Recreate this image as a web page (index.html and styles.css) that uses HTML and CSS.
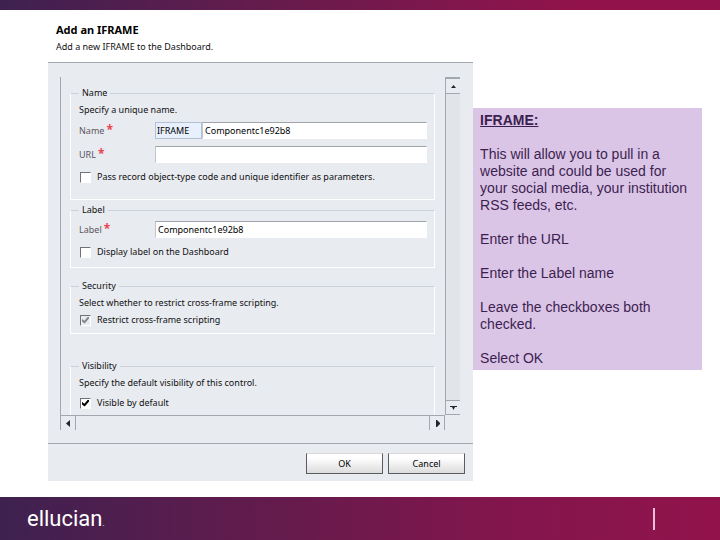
FILE: index.html
```html
<!DOCTYPE html>
<html lang="en">
<head>
    <meta charset="UTF-8">
    <title>Add an IFRAME</title>
    <link rel="stylesheet" href="styles.css">
</head>
<body>
<div class="top-bar"></div>

<main class="slide">
    <!-- Dialog -->
    <form class="dialog">
        <header class="dialog-header">
            <h1>Add an IFRAME</h1>
            <p>Add a new IFRAME to the Dashboard.</p>
        </header>

        <div class="dialog-body">
            <div class="scroll-area">
                <div class="pane">
                    <fieldset class="group group-name">
                        <legend>Name</legend>
                        <p>Specify a unique name.</p>
                        <div class="field">
                            <label for="name">Name<span class="required">*</span></label>
                            <input class="prefix" type="text" value="IFRAME" aria-label="Name prefix" readonly>
                            <input id="name" type="text" value="Componentc1e92b8">
                        </div>
                        <div class="field">
                            <label for="url">URL<span class="required">*</span></label>
                            <input id="url" type="text">
                        </div>
                        <label class="check"><input type="checkbox"> Pass record object-type code and unique identifier as parameters.</label>
                    </fieldset>

                    <fieldset class="group group-label">
                        <legend>Label</legend>
                        <div class="field">
                            <label for="label">Label<span class="required">*</span></label>
                            <input id="label" type="text" value="Componentc1e92b8">
                        </div>
                        <label class="check"><input type="checkbox"> Display label on the Dashboard</label>
                    </fieldset>

                    <fieldset class="group group-security">
                        <legend>Security</legend>
                        <p>Select whether to restrict cross-frame scripting.</p>
                        <label class="check"><input type="checkbox" checked disabled> Restrict cross-frame scripting</label>
                    </fieldset>

                    <fieldset class="group group-visibility">
                        <legend>Visibility</legend>
                        <p>Specify the default visibility of this control.</p>
                        <label class="check"><input type="checkbox" checked> Visible by default</label>
                    </fieldset>
                </div>

                <div class="scrollbar vertical">
                    <button type="button" aria-label="Scroll up"><svg width="7" height="7" viewBox="0 0 7 7"><path d="M1 5h5L3.500 2z"/></svg></button>
                    <button type="button" aria-label="Scroll down"><svg width="7" height="7" viewBox="0 0 7 7"><path d="M0 2h7v1H5L3.500 6 2 3H0z"/></svg></button>
                </div>
                <div class="scrollbar horizontal">
                    <button type="button" aria-label="Scroll left"><svg width="7" height="7" viewBox="0 0 7 7"><path d="M5 0v7L1 3.500z"/></svg></button>
                    <button type="button" aria-label="Scroll right"><svg width="7" height="7" viewBox="0 0 7 7"><path d="M2 0h1l3 3v1L3 7H2z"/></svg></button>
                </div>
            </div>
        </div>

        <footer class="dialog-footer">
            <button class="action" type="button">OK</button>
            <button class="action" type="button">Cancel</button>
        </footer>
    </form>

    <!-- Instructions -->
    <aside class="note">
        <h2>IFRAME:</h2>
        <p>This will allow you to pull in a website and could be used for your social media, your institution RSS feeds, etc.</p>
        <p>Enter the URL</p>
        <p>Enter the Label name</p>
        <p>Leave the checkboxes both checked.</p>
        <p>Select OK</p>
    </aside>
</main>

<!-- Footer -->
<footer class="brand-bar">
    <span class="brand">ellucian<small>.</small></span>
    <span class="divider"></span>
</footer>
</body>
</html>
```

FILE: styles.css
```css
* {
    box-sizing: border-box;
}

body {
    margin: 0;
    min-height: 100vh;
    display: flex;
    flex-direction: column;
    background-color: #ffffff;
    font-family: "Liberation Sans", Arial, sans-serif;
}

h1, h2, p {
    margin: 0;
}

.top-bar {
    height: 10px;
    background: linear-gradient(to right, #3e2150, #641c4d 36%, #92134c 80%);
}

.slide {
    flex: 1;
    display: flex;
    align-items: flex-start;
    padding: 0 18px 15px 48px;
}

/* Dialog */
.dialog {
    flex: 1;
    min-width: 0;
    font-family: "Noto Sans", "Open Sans", sans-serif;
    font-size: 9px;
    line-height: 14px;
    color: #111111;
}

.dialog-header {
    padding: 12px 8px 6px;
}

.dialog-header h1 {
    font-size: 11px;
    line-height: 16px;
    color: #000000;
}

.dialog-header p {
    line-height: 18px;
}

.dialog-body {
    padding: 14px 13px 13px 12px;
    background-color: #e8ebf0;
    border-top: 1px solid #a0a8ae;
}

.scroll-area {
    display: grid;
    grid-template-columns: 1fr 15px;
    grid-template-rows: 338px 15px;
}

.pane {
    overflow: hidden;
    padding: 10px 10px 0 9px;
    border-left: 1px solid #a3a8b0;
}

.group {
    min-width: 0;
    margin: 0;
    padding: 4px 7px 0 8px;
    border: 1px solid #ffffff;
    border-top-color: #cbd1d9;
}

.group legend {
    padding: 0 3px;
    line-height: 12px;
}

.group-name {
    padding-bottom: 15px;
    margin-bottom: 4px;
}

.group-label {
    padding-top: 0;
    padding-bottom: 8px;
    margin-bottom: 12px;
}

.group-security {
    padding-bottom: 6px;
    margin-bottom: 26px;
}

.group-security p {
    margin-bottom: 3px;
}

.group-visibility {
    padding-bottom: 12px;
}

.group-visibility p {
    margin-bottom: 6px;
}

.field {
    display: flex;
    align-items: center;
    margin: 5px 0 7px;
}

.field label {
    width: 76px;
    color: #5c5660;
}

.required {
    margin-left: 2px;
    font-size: 12px;
    font-weight: bold;
    line-height: 8px;
    color: #e84550;
}

.field input {
    flex: 1;
    min-width: 0;
    height: 17px;
    padding: 0 2px;
    border: 1px solid #ffffff;
    border-top-color: #a0a4a9;
    border-left-color: #c2c6cb;
    background-color: #ffffff;
    font: inherit;
    color: #000000;
}

.field .prefix {
    flex: 0 0 47px;
    padding: 0 1px;
    border-color: #b4c0d4;
    background-color: #e8f0fd;
}

.check {
    display: flex;
    align-items: center;
    gap: 6px;
    white-space: nowrap;
}

.check input {
    appearance: none;
    width: 11px;
    height: 11px;
    margin: 0 0 0 1px;
    border: 1px solid #ffffff;
    border-top-color: #6f7276;
    border-left-color: #6f7276;
    background-color: #ffffff;
}

.check input:checked::before {
    content: "";
    display: block;
    width: 7px;
    height: 7px;
    margin: 1px;
    background-color: #000000;
    clip-path: polygon(0 35%, 35% 60%, 85% 0, 100% 0, 100% 30%, 38% 100%, 0 70%);
}

.check input:disabled {
    background-color: #e8ebf0;
}

.check input:disabled::before {
    background-color: #85888c;
}

/* Scrollbars */
.scrollbar {
    display: flex;
    justify-content: space-between;
}

.scrollbar button {
    display: flex;
    align-items: center;
    justify-content: center;
    width: 15px;
    height: 15px;
    padding: 0;
    border: 0 solid #a3a8b0;
    background: none;
    fill: #22262b;
}

.vertical {
    flex-direction: column;
    border-top: 2px solid #a3a8b0;
    border-left: 1px solid #a3a8b0;
    background-color: #e1e5ea;
}

.vertical button {
    width: 14px;
    background-color: #e8ebf0;
}

.vertical button:first-child {
    border-bottom-width: 1px;
}

.vertical button:last-child {
    border-top-width: 1px;
    border-bottom-width: 1px;
}

.horizontal {
    border: 1px solid #a3a8b0;
    border-bottom: 0;
}

.horizontal button {
    height: 14px;
}

.horizontal button:first-child {
    border-right-width: 1px;
}

.horizontal button:last-child {
    border-left-width: 1px;
}

.dialog-footer {
    display: flex;
    justify-content: flex-end;
    gap: 5px;
    padding: 9px 8px 7px;
    background-color: #e8ebf0;
    border-top: 1px solid #a3a8b0;
}

.action {
    width: 77px;
    height: 21px;
    padding: 0;
    border: 1px solid #5a5c60;
    border-top-color: #d8d8d8;
    background: linear-gradient(#ffffff 20%, #dcdcdc);
    font: inherit;
    color: #000000;
}

/* Instructions */
.note {
    width: 35%;
    margin-top: 98px;
    padding: 4px 8px 3px 7px;
    background-color: #dbc5e7;
    font-size: 14px;
    line-height: 17px;
    color: #3c1f50;
}

.note h2 {
    font-size: 14px;
    text-decoration: underline;
}

.note p {
    margin-top: 17px;
}

/* Footer */
.brand-bar {
    display: flex;
    align-items: center;
    justify-content: space-between;
    height: 43px;
    padding: 0 65px 0 27px;
    background: linear-gradient(to right, #3e2150, #5f1c4d 33%, #80164c 67%, #92134c);
    color: #ffffff;
}

.brand {
    font-family: Roboto, "Liberation Sans", sans-serif;
    font-size: 22px;
}

.brand small {
    font-size: 8px;
}

.divider {
    width: 2px;
    height: 22px;
    background-color: #f0bdd6;
}
```
